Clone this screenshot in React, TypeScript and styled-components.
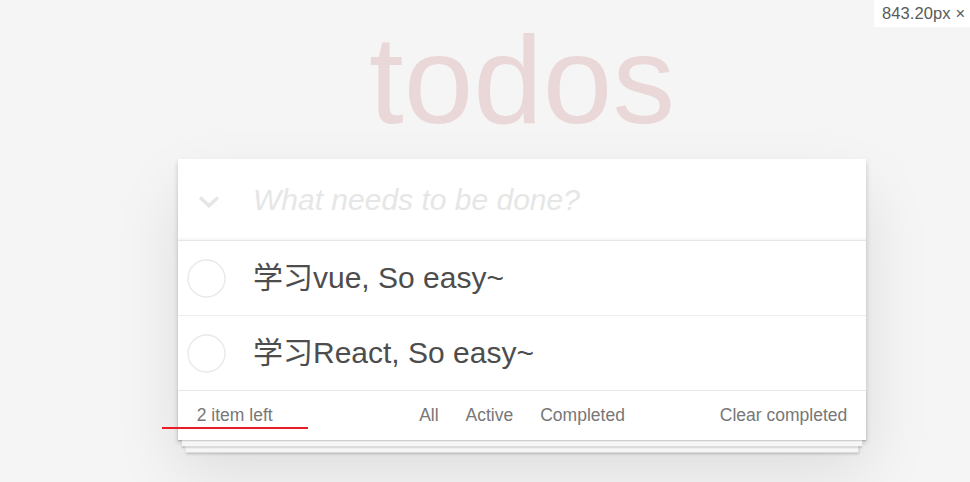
import React, { FC } from "react";
import styled, { createGlobalStyle } from "styled-components";

interface Todo {
  id: number;
  title: string;
}

const todos: Todo[] = [
  { id: 1, title: "学习vue, So easy~" },
  { id: 2, title: "学习React, So easy~" },
];

const GlobalStyle = createGlobalStyle`
  html, body {
    margin: 0;
    padding: 0;
    height: 100%;
    overflow: hidden;
    background: #f5f5f5;
  }
  body {
    font-family: "Liberation Sans", Arial, "Noto Sans CJK SC", sans-serif;
    color: #4d4d4d;
    -webkit-font-smoothing: antialiased;
  }
  * {
    box-sizing: border-box;
  }
`;

const Page = styled.div`
  width: 866px;
  padding-left: 178px;
`;

const Title = styled.h1`
  margin: 0 0 18px;
  padding-top: 17px;
  height: 141px;
  font-size: 125px;
  line-height: 125px;
  font-weight: 100;
  text-align: center;
  color: rgba(175, 47, 47, 0.15);
`;

const TodoApp = styled.section`
  position: relative;
  background: #fff;
  box-shadow: 0 2.5px 5px rgba(0, 0, 0, 0.2), 0 31px 62px rgba(0, 0, 0, 0.1);
`;

const Header = styled.header`
  display: flex;
  align-items: center;
  height: 81px;
  box-shadow: inset 0 -2px 1px rgba(0, 0, 0, 0.03);
`;

const ToggleAll = styled.label`
  display: flex;
  align-items: center;
  width: 75px;
  height: 100%;
  padding: 3px 0 0 20px;
`;

const NewTodo = styled.input`
  flex: 1;
  border: none;
  outline: none;
  background: transparent;
  padding: 0 20px 0 0;
  font-family: inherit;
  font-size: 30px;
  color: #4d4d4d;
  &::placeholder {
    font-style: italic;
    color: #e6e6e6;
  }
`;

const List = styled.ul`
  margin: 0;
  padding: 0;
  list-style: none;
  border-top: 1px solid #e6e6e6;
`;

const Item = styled.li<{ $last?: boolean }>`
  display: flex;
  align-items: center;
  height: ${(p) => (p.$last ? "74px" : "75px")};
  border-bottom: ${(p) => (p.$last ? "none" : "1px solid #ededed")};
`;

const Check = styled.span`
  display: flex;
  align-items: center;
  width: 75px;
  padding-left: 9px;
`;

const Label = styled.label`
  font-size: 30px;
  line-height: 36px;
  color: #4d4d4d;
  white-space: nowrap;
`;

const Footer = styled.footer`
  position: relative;
  display: grid;
  grid-template-columns: 1fr auto 1fr;
  align-items: center;
  height: 50px;
  padding: 0 18.75px;
  border-top: 1px solid #e6e6e6;
  font-size: 17.5px;
  color: #777;
  box-shadow: 0 1.25px 1.25px rgba(0, 0, 0, 0.2),
    0 10px 0 -3.75px #f6f6f6,
    0 11.25px 1.25px -3.75px rgba(0, 0, 0, 0.2),
    0 20px 0 -7.5px #f6f6f6,
    0 21.25px 2.5px -7.5px rgba(0, 0, 0, 0.2);
`;

const Count = styled.span`
  justify-self: start;
`;

const Filters = styled.ul`
  display: flex;
  margin: 0;
  padding: 0;
  list-style: none;
`;

const FilterLink = styled.a`
  display: block;
  margin: 0 3.75px;
  padding: 3.75px 8.75px;
  border: 1.25px solid transparent;
  border-radius: 4px;
  color: inherit;
  text-decoration: none;
`;

const ClearButton = styled.button`
  justify-self: end;
  border: none;
  background: none;
  padding: 0;
  font-family: inherit;
  font-size: 17.5px;
  color: inherit;
`;

const RedMark = styled.span`
  position: absolute;
  left: -16px;
  top: 36px;
  width: 146px;
  height: 2px;
  background: #ec1c24;
`;

const SizeBadge = styled.div`
  position: fixed;
  top: 0;
  right: 0;
  width: 96px;
  height: 27px;
  padding: 4px 0 0 8px;
  background: #fff;
  font-size: 16.5px;
  letter-spacing: 0.1px;
  color: #5a5a5a;
  white-space: nowrap;
`;

const Chevron: FC = () => (
  <svg width="22" height="13" viewBox="0 0 22 13">
    <path d="M2 2.5 L11 10.5 L20 2.5" fill="none" stroke="#e6e6e6" strokeWidth="3.6" />
  </svg>
);

const Circle: FC = () => (
  <svg width="39" height="39" viewBox="0 0 39 39">
    <circle cx="19.5" cy="19.5" r="18.5" fill="none" stroke="#e8e8e8" strokeWidth="1.3" />
  </svg>
);

const App: FC = () => {
  return (
    <>
      <GlobalStyle />
      <Page>
        <Title>todos</Title>
        <TodoApp>
          <Header>
            <ToggleAll>
              <Chevron />
            </ToggleAll>
            <NewTodo placeholder="What needs to be done?" />
          </Header>
          <List>
            {todos.map((todo, i) => (
              <Item key={todo.id} $last={i === todos.length - 1}>
                <Check>
                  <Circle />
                </Check>
                <Label>{todo.title}</Label>
              </Item>
            ))}
          </List>
          <Footer>
            <Count>2 item left</Count>
            <Filters>
              <li>
                <FilterLink>All</FilterLink>
              </li>
              <li>
                <FilterLink>Active</FilterLink>
              </li>
              <li>
                <FilterLink>Completed</FilterLink>
              </li>
            </Filters>
            <ClearButton>Clear completed</ClearButton>
            <RedMark />
          </Footer>
        </TodoApp>
      </Page>
      <SizeBadge>843.20px ×</SizeBadge>
    </>
  );
};

export default App;
